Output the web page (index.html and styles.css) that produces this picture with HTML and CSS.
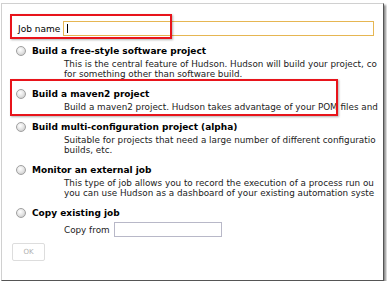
FILE: index.html
```html
<!DOCTYPE html>
<html lang="en">
<head>
    <meta charset="UTF-8">
    <title>New Job - Hudson</title>
    <link rel="stylesheet" href="styles.css">
</head>
<body>
    <div class="frame">
        <div class="job-row">
            <label for="name">Job name</label>
            <div class="field">
                <input type="text" id="name" class="job-input">
                <span class="caret"></span>
            </div>
        </div>

        <div class="option">
            <div class="option-head"><span class="radio"></span>Build a free-style software project</div>
            <div class="option-desc">This is the central feature of Hudson. Hudson will build your project, co<br>for something other than software build.</div>
        </div>

        <div class="option">
            <div class="option-head"><span class="radio"></span>Build a maven2 project</div>
            <div class="option-desc">Build a maven2 project. Hudson takes advantage of your POM files and</div>
        </div>

        <div class="option">
            <div class="option-head"><span class="radio"></span>Build multi-configuration project (alpha)</div>
            <div class="option-desc">Suitable for projects that need a large number of different configuratio<br>builds, etc.</div>
        </div>

        <div class="option">
            <div class="option-head"><span class="radio"></span>Monitor an external job</div>
            <div class="option-desc">This type of job allows you to record the execution of a process run ou<br>you can use Hudson as a dashboard of your existing automation syste</div>
        </div>

        <div class="option">
            <div class="option-head"><span class="radio"></span>Copy existing job</div>
            <div class="copy-row">
                <span>Copy from</span>
                <input type="text" class="copy-input">
            </div>
        </div>

        <button class="btn-ok" disabled>OK</button>
    </div>

    <div class="mark mark-name"></div>
    <div class="mark mark-maven"></div>
</body>
</html>
```

FILE: styles.css
```css
body {
    margin: 0;
    background: #fff;
    font-family: 'DejaVu Sans', Verdana, sans-serif;
    color: #000;
}

.frame {
    margin: 3px 0 0 1px;
    width: 371px;
    height: 260px;
    padding: 0 0 16px 10px;
    background: #fff;
    border: 1px solid #d0d0d0;
    border-right-color: #555;
    border-bottom-color: #555;
    box-shadow: 2px 2px 2px rgba(0,0,0,0.45);
    overflow: hidden;
}

.job-row {
    display: flex;
    align-items: center;
    gap: 3px;
    height: 15px;
    margin-top: 17px;
    padding-left: 6px;
    font-size: 9px;
}

.field {
    position: relative;
    flex: 1;
    height: 15px;
    margin-right: 9px;
}

.job-input {
    box-sizing: border-box;
    width: 100%;
    height: 15px;
    margin: 0;
    border: 1px solid #e6b652;
    outline: none;
}

.caret {
    position: absolute;
    left: 4px;
    top: 3px;
    width: 1px;
    height: 9px;
    background: #000;
}

.option {
    margin-top: 9px;
}

.option-head {
    display: flex;
    align-items: center;
    gap: 6px;
    height: 12px;
    padding-left: 4px;
    font-size: 9px;
    font-weight: bold;
    white-space: nowrap;
}

.radio {
    width: 8px;
    height: 8px;
    border: 1px solid #a0a0a0;
    border-radius: 50%;
    background: radial-gradient(circle at 40% 35%, #fff 0%, #e4e4e4 50%, #bdbdbd 100%);
}

.option-desc {
    margin: 2px 0 0 52px;
    font-size: 8.8px;
    line-height: 10px;
    color: #222;
    white-space: nowrap;
}

.copy-row {
    display: flex;
    align-items: center;
    gap: 4px;
    height: 15px;
    margin: 3px 0 0 52px;
    font-size: 8.8px;
    color: #222;
}

.copy-input {
    box-sizing: border-box;
    width: 108px;
    height: 15px;
    margin: 0;
    border: 1px solid #b8b8c8;
}

.btn-ok {
    display: block;
    width: 33px;
    height: 18px;
    margin-top: 6px;
    padding: 0;
    border: 1px solid #ddd;
    border-radius: 2px;
    background: #fff;
    color: #b0b0b0;
    font-family: 'DejaVu Sans', Verdana, sans-serif;
    font-size: 7px;
}

.mark {
    position: absolute;
    border: 2px solid #e8141b;
    box-shadow: 1px 1px 2px rgba(0,0,0,0.3);
}

.mark-name {
    left: 10px;
    top: 14px;
    width: 158px;
    height: 21px;
}

.mark-maven {
    left: 10px;
    top: 79px;
    width: 324px;
    height: 33px;
}
```
